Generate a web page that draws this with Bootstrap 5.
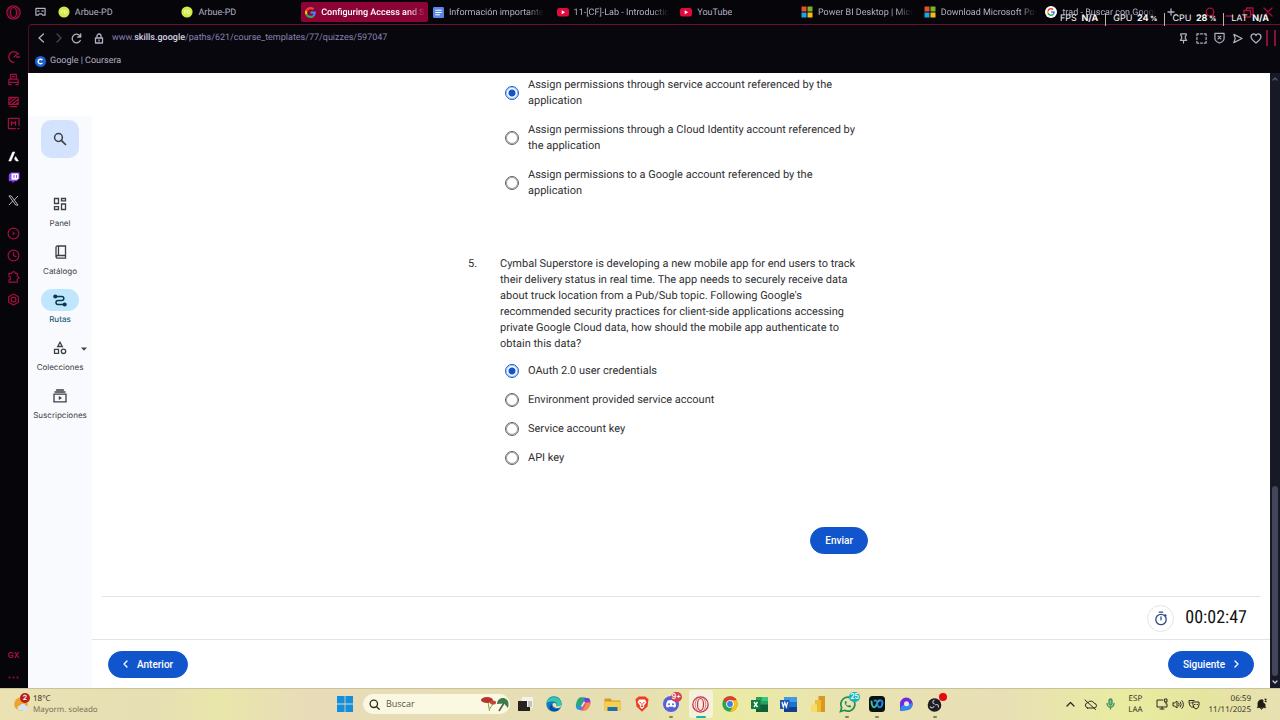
<!DOCTYPE html>
<html lang="es">
<head>
<meta charset="utf-8">
<meta name="viewport" content="width=device-width, initial-scale=1">
<title>Configuring Access and Security</title>
<link href="https://cdn.jsdelivr.net/npm/bootstrap@5.3.0/dist/css/bootstrap.min.css" rel="stylesheet">
<style>
:root{--gx:#a50f3c;--blue:#1155cc;--ui:Inter,"Liberation Sans",sans-serif;--seg:"Open Sans","Noto Sans",sans-serif;--rob:Roboto,"Liberation Sans",sans-serif}
body{font-family:var(--rob);font-size:11px;line-height:16px;color:#303134;background:#05050a;text-rendering:geometricPrecision}
svg{display:block;flex:none}
a{text-decoration:none;color:inherit}
button.bare{background:none;border:0;padding:0;color:inherit;display:grid;place-items:center}
.line-ic{fill:none;stroke:currentColor;stroke-width:1.3;stroke-linecap:round;stroke-linejoin:round}
.center-grid{display:grid;place-items:center}
.shrink-y{min-height:0}
.shrink-x{min-width:0}
/* browser chrome */
.gx-rail{width:28px;color:var(--gx);flex:none;padding-right:1px}
.gx-rail .slot{height:22px;width:27px}
.gx-rail .logo-slot{height:25px;margin-bottom:21px}
.gx-rail .gap-slot{margin-top:11px}
.gx-rail .gx-label{font:700 8px/22px var(--ui)}
.chrome{font-family:var(--rob);color:#b4b1c0;min-width:0}
.strip{height:24px;padding-right:7px}
.spaces{width:18px}
.tabs{display:grid;grid-template-columns:124fr 124fr 128fr 124fr 124fr 121fr 123fr 122fr 124fr;min-width:0}
.tab-item{height:20px;padding:0 3px 0 4px;gap:5px;font-size:9px;line-height:20px;min-width:0;overflow:hidden;white-space:nowrap;border-radius:2px;margin-right:1px}
.tab-item span{overflow:hidden;min-width:0;padding-top:1px}
.tab-item .fade-end{-webkit-mask-image:linear-gradient(90deg,#000 82%,transparent)}
.tab-item.active{background:#8c0436;color:#fff;font-weight:500}
.frame{border-top:1px solid #6b1030;border-left:1px solid #4c0c24;border-top-left-radius:4px;background:#07070d}
.addr{height:26px;padding:0 4px 0 8px}
.url{font-size:9px;line-height:16px;color:#8a84b0}
.url b{color:#d6d4e4;font-weight:500}
.marks{height:22px;padding-left:6px;font-size:9px;padding-bottom:2px}
.plus{width:12px;height:12px;background:#1b1a2b;border-radius:2px;margin-right:28px}
.gxbar{width:2px;height:16px;background:#8c0f39}
.wincon{color:var(--gx);gap:9px}
.perf{position:absolute;top:12px;right:11px;gap:7px;color:#f4f4f4;font:400 9px/14px var(--ui)}
.perf b{font-weight:700;margin-left:2px}
.perf small{font-size:7px}
.perf i{width:1px;height:13px;background:#b5b5b5}
/* page */
.site{background:#fff;min-height:0}
.side{width:64px;margin-top:43px;background:#f8fafd;padding-top:4px;flex:none;font:400 8px/12px var(--ui);color:#3c4043}
.side .find{width:38px;height:38px;border-radius:10px;background:#d3e3fd;margin-bottom:35px}
.side .entry{height:48px;width:64px;gap:2px;position:relative}
.pill{width:38px;height:22px;border-radius:11px}
.active .pill{background:#bfe6fd;color:#063b4a}
.side .active{color:#1c5a7c;font-weight:500}
.caret{position:absolute;right:5px;top:10px}
.quiz{width:400px;margin:0 auto;padding-top:4px}
.viewport{padding-right:26px;overflow:hidden}
.opts{gap:13px;padding-left:37px}
.opts label{gap:9px}
.opts .form-check-input{width:14px;height:14px;margin:0;float:none;flex:none;background:#fff;border:1px solid #5f6368;box-shadow:inset 0 0 0 1px #a3a5a8}
.opts .form-check-input:checked{border-color:#1a5bd0;box-shadow:inset 0 0 0 1px #a9c4ee;background:radial-gradient(circle,#1155cc 3px,#fff 4px)}
.opts .wraps{max-width:330px}
.q-row{margin-top:57px;margin-bottom:11px}
.q-num{width:32px;flex:none}
.q-text{max-width:356px}
.btn-g{--bs-btn-color:#fff;--bs-btn-bg:var(--blue);--bs-btn-border-color:var(--blue);--bs-btn-hover-bg:#0b4ab8;--bs-btn-hover-color:#fff;--bs-btn-padding-x:14px;--bs-btn-padding-y:5px;--bs-btn-border-radius:14px;font:500 10px/15px var(--rob);height:27px;gap:9px}
.send{margin-top:61px}
.rule{border-top:1px solid #e0e3e8;margin:0 10px}
.clockrow{height:42px;padding-right:23px;gap:11px}
.ring{width:27px;height:27px;border:1px solid #e1e4ea;border-radius:50%;color:#2f4b87}
.digits{font:400 18px/24px "Roboto Condensed","Liberation Sans Narrow",Roboto,sans-serif;color:#111}
.foot{border-top:1px solid #e0e3e8;height:49px;padding:0 16px}
.sbar{width:10px;background:#171a26;color:#c9cbd6;flex:none;padding:4px 0}
.thumb{width:6px;height:190px;background:#42465a;border-radius:3px}
/* taskbar */
.dock{height:32px;background:linear-gradient(90deg,#eae2b2 0,#e6dfb4 12%,#e9e6aa 17%,#e8dcb8 24%,#e6dfb2 50%,#ebeba4 57%,#e9e3b0 66%,#e8dfb6 78%,#e9eca0 88%,#e6e59f 94%,#e8e0b2);border-top:1px solid #c9c29c;padding-bottom:1px;font:400 8px/11px var(--seg);color:#2c2a20;display:grid;grid-template-columns:1fr 620px 1fr;align-items:center}
.weather{padding-left:13px;gap:4px}
.weather .sky{color:#706b50}
.launcher{padding-left:7px}
.start-btn{width:16px}
.seek{width:147px;height:20px;border-radius:10px;background:#fbf8e2;padding:0 2px 0 6px;gap:6px;margin-left:6px}
.seek input{width:88px;border:0;background:none;outline:0;padding:0;font:400 9px/16px var(--seg);color:#55534a}
.apps{display:grid;grid-template-columns:repeat(15,1fr);flex:1}
.app-ic{position:relative;height:28px;width:100%}
.app-ic.run::after{content:"";position:absolute;bottom:0;left:50%;margin-left:-2px;width:4px;height:2px;border-radius:1px;background:#85805f}
.app-ic.now{background:#f6f1da!important;border-radius:3px;width:24px;justify-self:center}
.app-ic.now::after{width:10px;margin-left:-5px;background:#17b3b0}
.bub{position:absolute;z-index:1;border-radius:6px;color:#fff;font:600 7px/10px var(--ui);text-align:center;min-width:10px;height:10px;padding:0 1px}
.bub-weather{left:20px;top:0;background:#b5201c}
.bub-chat{right:4px;top:2px;background:#d34155}
.bub-wa{right:2px;top:2px;background:#17b3bb}
.bub-rec{right:3px;top:3px;min-width:8px;height:8px;background:#e8090d}
.tray{padding-right:13px;gap:9px}
.tray .trio{gap:4px}
</style>
</head>
<body>
<svg width="0" height="0" class="position-absolute" aria-hidden="true"><defs>
<symbol id="pd" viewBox="0 0 12 12"><circle cx="6" cy="6" r="5.6" fill="#d3ea45"/><path d="M3.4 7.8V4.2h1a1 1 0 0 1 0 2.1h-1M6.6 4.2v3.6h.6a1.8 1.8 0 0 0 0-3.6z" fill="none" stroke="#f3f8b8" stroke-width=".9"/></symbol>
<symbol id="gg" viewBox="0 0 48 48"><path fill="#ea4335" d="M24 9.5c3.5 0 6.700 1.200 9.200 3.600l6.900-6.900C35.900 2.400 30.500 0 24 0 14.600 0 6.500 5.400 2.600 13.200l8 6.200C12.400 13.700 17.700 9.500 24 9.500z"/><path fill="#4285f4" d="M47 24.500c0-1.600-.2-3.100-.4-4.500H24v9h12.900c-.6 3-2.200 5.500-4.700 7.200l7.700 6C44.400 38 47 31.800 47 24.500z"/><path fill="#fbbc05" d="M10.500 28.600a14 14 0 0 1 0-9.200l-8-6.200a24 24 0 0 0 0 21.600z"/><path fill="#34a853" d="M24 48c6.500 0 11.900-2.100 15.900-5.800l-7.700-6c-2.200 1.500-4.900 2.300-8.200 2.300-6.300 0-11.600-4.200-13.500-9.900l-8 6.200C6.500 42.600 14.600 48 24 48z"/></symbol>
<symbol id="yt" viewBox="0 0 12 12"><rect y="2" width="12" height="8.500" rx="2.500" fill="#e00a3c"/><path d="M4.700 4.300v4l3.400-2z" fill="#fff"/></symbol>
<symbol id="ms" viewBox="0 0 12 12"><path fill="#e8502a" d="M.5.5h5v5h-5z"/><path fill="#7db32c" d="M6.500.5h5v5h-5z"/><path fill="#22a2e0" d="M.5 6.500h5v5h-5z"/><path fill="#f6bb1a" d="M6.500 6.500h5v5h-5z"/></symbol>
</defs></svg>

<div class="d-flex flex-column vh-100 position-relative">
<div class="d-flex flex-fill shrink-y">

  <nav class="gx-rail d-flex flex-column align-items-center" aria-label="Opera GX">
    <button class="bare logo-slot slot" aria-label="Opera"><svg width="15" height="15" viewBox="0 0 15 15" class="line-ic"><circle cx="7.500" cy="7.500" r="6.600"/><ellipse cx="7.500" cy="7.500" rx="3" ry="5.200"/><path d="M5 1.700c-3 3-3 8.600 0 11.600M10 1.700c3 3 3 8.600 0 11.600" stroke-width=".7"/></svg></button>
    <button class="bare slot" aria-label="GX Control"><svg width="14" height="14" viewBox="0 0 14 14" class="line-ic"><path d="M7 12.300A5.300 5.300 0 1 1 11.500 4.200M7 7l3-3M9.500 7h3"/></svg></button>
    <button class="bare slot" aria-label="Mods"><svg width="13" height="13" viewBox="0 0 14 14" class="line-ic"><path d="M4 6.500v-5h6v5M2 12V7.500q0-1 1-1h8q1 0 1 1V12M2 10h10M2 12.500h2.500M9.500 12.500H12M6 4h2"/></svg></button>
    <button class="bare slot" aria-label="GX Corner"><svg width="13" height="13" viewBox="0 0 14 14" class="line-ic"><path d="M2 2.500h10v7.500H2zM2 6l4-3.500M2 9.500l8-7M5.500 10 12 4.500M9.500 10 12 8M3.500 12.500h7"/></svg></button>
    <button class="bare slot" aria-label="Mensajes"><svg width="13" height="13" viewBox="0 0 14 14" class="line-ic"><path d="M13 9V1.500H1.500v11H9M13 12.500h-1.500"/><path d="M4.800 9V5L7 7.200 9.200 5v4"/></svg></button>
    <button class="bare slot gap-slot text-white" aria-label="Aria"><svg width="11" height="11" viewBox="0 0 12 12"><path d="M5 1h2.500L3.300 11H.8L5 1zM8.300 6 11.500 11H8.800L7 8.500z" fill="#fff" stroke="#fff" stroke-width=".5"/></svg></button>
    <button class="bare slot" aria-label="Twitch"><svg width="12" height="12" viewBox="0 0 12 12"><path d="M3 .5h8.500v6L8.700 9.200H6.500l-2 2v-2H.8V2.700z" fill="#8d45f5"/><path d="M3.500 1.500h7v4.700L9 7.700H3.500z" fill="#fff"/><path d="M6 3v2.800M8.500 3v2.800" stroke="#8d45f5"/></svg></button>
    <button class="bare slot" aria-label="X"><svg width="11" height="11" viewBox="0 0 12 12" fill="none" stroke="#c9c9c9"><path d="M1 1h2.500L11 11H8.500zM11 1 6.800 5.500M1 11l4.300-4.600"/></svg></button>
    <button class="bare slot gap-slot" aria-label="Reproductor"><svg width="13" height="13" viewBox="0 0 14 14" class="line-ic"><circle cx="7" cy="7" r="5.800"/><path d="M6.300 5.500v3L8.500 7z" fill="currentColor" stroke-width=".5"/></svg></button>
    <button class="bare slot" aria-label="Historial"><svg width="13" height="13" viewBox="0 0 14 14" class="line-ic"><circle cx="7" cy="7" r="5.800"/><path d="M7 3.800V7l2.500 1.200"/></svg></button>
    <button class="bare slot" aria-label="Extensiones"><svg width="13" height="13" viewBox="0 0 14 14" class="line-ic"><path d="M2 2.500h3.200a1.800 1.800 0 0 1 3.600 0H11v3l2 1.700-2 1.800v3H2.200V9.500a1.700 1.700 0 0 0 0-3.400z"/></svg></button>
    <button class="bare slot" aria-label="Ajustes"><svg width="13" height="13" viewBox="0 0 14 14" class="line-ic"><path d="M7 1l5.200 3v6L7 13l-5.200-3V4z"/><circle cx="7" cy="7" r="2.600"/></svg></button>
    <button class="bare slot gx-label mt-auto" aria-label="GX">GX</button>
    <button class="bare slot" aria-label="Más"><svg width="11" height="3" viewBox="0 0 11 3" fill="currentColor"><circle cx="1.500" cy="1.500" r="1"/><circle cx="5.500" cy="1.500" r="1"/><circle cx="9.500" cy="1.500" r="1"/></svg></button>
  </nav>

  <div class="d-flex flex-column flex-fill shrink-x">
    <header class="chrome">
      <div class="strip d-flex align-items-center">
        <button class="bare spaces ms-1" aria-label="Espacios"><svg width="11" height="10" viewBox="0 0 12 10" class="line-ic"><path d="M1 1h10v7.500H8.500L7.300 7H4.700L3.500 8.500H1z"/><path d="M3 4h1.500M7.500 4H9"/></svg></button>
        <div class="tabs flex-fill ms-1">
          <a href="#" class="tab-item d-flex align-items-center"><svg width="12" height="12"><use href="#pd"/></svg><span>Arbue-PD</span></a>
          <a href="#" class="tab-item d-flex align-items-center"><svg width="12" height="12"><use href="#pd"/></svg><span>Arbue-PD</span></a>
          <a href="#" class="tab-item active d-flex align-items-center"><svg width="11" height="11"><use href="#gg"/></svg><span class="fade-end">Configuring Access and S</span></a>
          <a href="#" class="tab-item d-flex align-items-center"><svg width="11" height="11" viewBox="0 0 12 12"><rect width="12" height="12" rx="1.500" fill="#5a86e8"/><path d="M2.500 3.500h7M2.500 6h7M2.500 8.500h5" stroke="#fff" stroke-width="1.200"/></svg><span class="fade-end">Información importante</span></a>
          <a href="#" class="tab-item d-flex align-items-center"><svg width="12" height="12"><use href="#yt"/></svg><span class="fade-end">11-[CF]-Lab - Introductic</span></a>
          <a href="#" class="tab-item d-flex align-items-center"><svg width="12" height="12"><use href="#yt"/></svg><span>YouTube</span></a>
          <a href="#" class="tab-item d-flex align-items-center"><svg width="12" height="12"><use href="#ms"/></svg><span class="fade-end">Power BI Desktop | Micr</span></a>
          <a href="#" class="tab-item d-flex align-items-center"><svg width="12" height="12"><use href="#ms"/></svg><span class="fade-end">Download Microsoft Pov</span></a>
          <a href="#" class="tab-item d-flex align-items-center"><svg width="12" height="12" viewBox="0 0 12 12"><circle cx="6" cy="6" r="6" fill="#fff"/><use href="#gg" x="2" y="2" width="8" height="8"/></svg><span class="fade-end">trad - Buscar con Googl</span></a>
        </div>
        <button class="bare plus" aria-label="Nueva pestaña"><svg width="8" height="8" viewBox="0 0 8 8" class="line-ic"><path d="M4 1v6M1 4h6"/></svg></button>
        <div class="wincon d-flex align-items-center">
          <button class="bare" aria-label="Buscar pestañas"><svg width="11" height="11" viewBox="0 0 11 11" class="line-ic"><circle cx="5" cy="5" r="3.800"/><path d="M8 8l2 2"/></svg></button>
          <button class="bare" aria-label="Minimizar"><svg width="9" height="9" viewBox="0 0 9 9" class="line-ic"><path d="M1 8h7"/></svg></button>
          <button class="bare" aria-label="Restaurar"><svg width="11" height="11" viewBox="0 0 11 11" class="line-ic"><path d="M1 3.500h6.500V10H1zM3.500 3.500V1H10v6.500H7.500"/></svg></button>
          <button class="bare" aria-label="Cerrar"><svg width="10" height="10" viewBox="0 0 10 10" class="line-ic"><path d="M1 1l8 8M9 1 1 9"/></svg></button>
        </div>
      </div>
      <div class="frame">
        <div class="addr d-flex align-items-center">
          <button class="bare me-2" aria-label="Atrás"><svg width="9" height="10" viewBox="0 0 9 10" class="line-ic"><path d="M6.500 1 2 5l4.500 4"/></svg></button>
          <button class="bare me-2" aria-label="Adelante" style="color:#4a4854"><svg width="9" height="10" viewBox="0 0 9 10" class="line-ic"><path d="M3 1l4 4-4 4"/></svg></button>
          <button class="bare me-2" aria-label="Recargar"><svg width="11" height="11" viewBox="0 0 11 11" class="line-ic"><path d="M9.300 7.500A4.300 4.300 0 1 1 9.500 4M9.700 1v3h-3"/></svg></button>
          <svg class="line-ic ms-1 me-1" width="10" height="11" viewBox="0 0 10 11"><path d="M1.500 5h7v5h-7zM3 5V3a2 2 0 0 1 4 0v2M5 7v1"/></svg>
          <a href="#" class="url ms-1">www.<b>skills.google</b>/paths/621/course_templates/77/quizzes/597047</a>
          <div class="d-flex align-items-center ms-auto gap-1">
            <div class="d-flex align-items-center" style="gap:7px">
            <button class="bare" aria-label="Fijar"><svg width="11" height="11" viewBox="0 0 12 12" class="line-ic"><path d="M3 1h6v1.500L8 3.500V6l1.500 2h-7L4 6V3.500L3 2.500zM6 8v3"/></svg></button>
            <button class="bare" aria-label="Captura"><svg width="11" height="11" viewBox="0 0 12 12" class="line-ic"><path d="M1 3V1h2M5 1h2M9 1h2v2M1 5v2M11 5v2M1 9v2h2M5 11h2M9 11h2M11 9v2"/></svg></button>
            <button class="bare" aria-label="Bloqueador"><svg width="11" height="12" viewBox="0 0 12 13" class="line-ic"><path d="M1 1.500h10V7q0 3-5 5-5-2-5-5zM4.500 4.500l3 3M7.500 4.500l-3 3"/></svg></button>
            <button class="bare" aria-label="Enviar a Flow"><svg width="11" height="11" viewBox="0 0 12 12" class="line-ic"><path d="M2 1.500 11 6l-9 4.500L3.500 6z"/></svg></button>
            <button class="bare" aria-label="Favorito"><svg width="12" height="11" viewBox="0 0 12 11" class="line-ic"><path d="M6 10C3 7.800 1 6 1 3.800A2.600 2.600 0 0 1 6 2.600a2.600 2.600 0 0 1 5 1.200C11 6 9 7.800 6 10z"/></svg></button>
            </div>
            <div class="d-flex" style="gap:6px"><span class="gxbar"></span><span class="gxbar"></span></div>
          </div>
        </div>
        <div class="marks d-flex align-items-center gap-1">
          <svg width="11" height="11" viewBox="0 0 12 12"><circle cx="6" cy="6" r="6" fill="#1a62d6"/><path d="M8 4.500a2.500 2.500 0 1 0 0 3" fill="none" stroke="#fff" stroke-width="1.600"/></svg>
          <a href="#">Google | Coursera</a>
        </div>
      </div>
    </header>

    <div class="d-flex flex-fill shrink-y">
      <div class="site d-flex flex-fill shrink-x">
        <nav class="side d-flex flex-column align-items-center" aria-label="Principal">
          <button class="bare find" aria-label="Buscar"><svg width="14" height="14" viewBox="0 0 14 14" class="line-ic"><circle cx="5.500" cy="5.500" r="3.900" stroke-width="1.500"/><path d="M8.300 8.300 12.500 12.500" stroke-width="1.700"/></svg></button>
          <a href="#" class="entry d-flex flex-column align-items-center"><span class="pill center-grid"><svg width="14" height="14" viewBox="0 0 14 14" class="line-ic" style="stroke-linejoin:miter"><path d="M1.500 1.500H5.500v5H1.500zM8.500 1.500h4v2.300h-4zM1.500 9.700H5.500V12.500H1.500zM8.500 7h4v5.500h-4z"/></svg></span><span>Panel</span></a>
          <a href="#" class="entry d-flex flex-column align-items-center"><span class="pill center-grid"><svg width="13" height="14" viewBox="0 0 13 14" class="line-ic" style="stroke-linejoin:miter"><path d="M3.500 1h8v9.500h-8M3.500 10.500a1.300 1.300 0 0 0 0 2.600h8v-2.600M2 12V2.500Q2 1 3.500 1M4.500 1v9.500"/></svg></span><span>Catálogo</span></a>
          <a href="#" class="entry active d-flex flex-column align-items-center"><span class="pill center-grid"><svg width="14" height="13" viewBox="0 0 14 13" class="line-ic"><circle cx="2.300" cy="2.500" r="1.400" fill="currentColor"/><circle cx="11.700" cy="10.500" r="1.400" fill="currentColor"/><path d="M3.500 2.500h5.300a2 2 0 0 1 0 4H5a2 2 0 0 0 0 4h6" stroke-width="1.500"/></svg></span><span>Rutas</span></a>
          <a href="#" class="entry d-flex flex-column align-items-center"><span class="pill center-grid"><svg width="14" height="14" viewBox="0 0 14 14" class="line-ic" style="stroke-linejoin:miter"><path d="M7 1.300 9.300 5.500H4.700zM1.500 8.300h4v4h-4z"/><circle cx="10.500" cy="10.300" r="2.200"/></svg></span><span>Colecciones</span><svg class="caret" width="6" height="4" viewBox="0 0 6 4"><path d="M0 .5h6L3 3.700z" fill="#444"/></svg></a>
          <a href="#" class="entry d-flex flex-column align-items-center"><span class="pill center-grid"><svg width="14" height="14" viewBox="0 0 14 14" class="line-ic" style="stroke-linejoin:miter"><path d="M1 5.200h12v7.600H1zM2 3h10M3.500 1h7"/><path d="M5.800 7v4l3.200-2z" fill="currentColor" stroke="none"/></svg></span><span>Suscripciones</span></a>
        </nav>

        <main class="d-flex flex-column flex-fill shrink-x">
          <div class="viewport flex-fill">
            <form class="quiz" onsubmit="return false">
              <div class="opts d-flex flex-column">
                <label class="d-flex align-items-center"><input class="form-check-input" type="radio" name="q4" checked><span class="wraps">Assign permissions through service account referenced by the application</span></label>
                <label class="d-flex align-items-center"><input class="form-check-input" type="radio" name="q4"><span class="wraps">Assign permissions through a Cloud Identity account referenced by the application</span></label>
                <label class="d-flex align-items-center"><input class="form-check-input" type="radio" name="q4"><span class="wraps">Assign permissions to a Google account referenced by the application</span></label>
              </div>
              <div class="q-row d-flex"><span class="q-num">5.</span><div class="q-text">Cymbal Superstore is developing a new mobile app for end users to track their delivery status in real time. The app needs to securely receive data about truck location from a Pub/Sub topic. Following Google's recommended security practices for client-side applications accessing private Google Cloud data, how should the mobile app authenticate to obtain this data?</div></div>
              <div class="opts d-flex flex-column">
                <label class="d-flex align-items-center"><input class="form-check-input" type="radio" name="q5" checked><span>OAuth 2.0 user credentials</span></label>
                <label class="d-flex align-items-center"><input class="form-check-input" type="radio" name="q5"><span>Environment provided service account</span></label>
                <label class="d-flex align-items-center"><input class="form-check-input" type="radio" name="q5"><span>Service account key</span></label>
                <label class="d-flex align-items-center"><input class="form-check-input" type="radio" name="q5"><span>API key</span></label>
              </div>
              <div class="send d-flex justify-content-end"><button class="btn btn-g" type="submit">Enviar</button></div>
            </form>
          </div>
          <div class="rule"></div>
          <div class="clockrow d-flex align-items-center justify-content-end">
            <span class="ring center-grid"><svg width="14" height="15" viewBox="0 0 14 15" class="line-ic"><circle cx="7" cy="8.500" r="5.200"/><path d="M5.300 1.200h3.400M7 5.800v3M11 3.800l1 1"/></svg></span>
            <span class="digits">00:02:47</span>
          </div>
          <div class="foot d-flex align-items-center justify-content-between">
            <button class="btn btn-g d-flex align-items-center"><svg width="5" height="8" viewBox="0 0 5 8" class="line-ic"><path d="M4 1 1 4l3 3"/></svg>Anterior</button>
            <button class="btn btn-g d-flex align-items-center">Siguiente<svg width="5" height="8" viewBox="0 0 5 8" class="line-ic"><path d="M1 1l3 3-3 3"/></svg></button>
          </div>
        </main>
      </div>
      <div class="sbar d-flex flex-column align-items-center" aria-hidden="true">
        <svg width="6" height="4" viewBox="0 0 6 4" class="line-ic" style="color:#555a6c"><path d="M1 3l2-2 2 2"/></svg>
        <div class="thumb mt-auto mb-1"></div>
        <svg width="6" height="4" viewBox="0 0 6 4" class="line-ic"><path d="M1 1l2 2 2-2"/></svg>
      </div>
    </div>
  </div>
</div>

<div class="perf d-flex align-items-center"><span>FPS <b>N/A</b></span><i></i><span>GPU <b>24<small> %</small></b></span><i></i><span>CPU <b>28<small> %</small></b></span><i></i><span>LAT <b>N/A</b></span></div>

<footer class="dock">
  <div class="weather d-flex align-items-center position-relative">
    <svg width="16" height="16" viewBox="0 0 16 16"><circle cx="8" cy="8" r="6.800" fill="#f0a32a"/><path d="M7 14.500a2.500 2.500 0 0 1 0-5 3.200 3.200 0 0 1 5.500-.3 2.700 2.700 0 0 1 0 5.300z" fill="#d5e4f5"/></svg>
    <span class="bub bub-weather">2</span>
    <div><div>18°C</div><div class="sky">Mayorm. soleado</div></div>
  </div>
  <div class="launcher d-flex align-items-center">
    <button class="bare start-btn me-1" aria-label="Inicio"><svg width="16" height="16" viewBox="0 0 16 16"><path fill="#138fdc" d="M0 0h7.600v7.600H0zM8.400 0H16v7.600H8.400zM0 8.400h7.600V16H0zM8.400 8.400H16V16H8.400z"/></svg></button>
    <div class="seek d-flex align-items-center">
      <svg width="11" height="11" viewBox="0 0 11 11" class="line-ic"><circle cx="4.800" cy="4.800" r="3.700"/><path d="M7.700 7.700l2.500 2.500"/></svg>
      <input type="text" value="Buscar" aria-label="Buscar">
      <svg width="30" height="16" viewBox="0 0 30 16"><path d="M8 6l1.500 9M15 5 9.500 13" stroke="#7fa04a" fill="none"/><ellipse cx="7" cy="4" rx="6" ry="3" fill="#b5342a"/><ellipse cx="13" cy="6.500" rx="3" ry="2" fill="#c2453a"/><path d="M17 8c0-4 4-7 8-5.500s4 6 3 9.500l-4-4.500z" fill="#3c7d4b"/><path d="M24 7l-5 8" stroke="#4d5c36" stroke-width="1.500"/></svg>
    </div>
    <div class="apps">
      <button class="bare app-ic" aria-label="Vista de tareas"><svg width="16" height="16" viewBox="0 0 16 16"><path fill="#f5f2ea" d="M5 1h11v11H5z"/><path fill="#c8c4ba" d="M11 5h4v6h-4z"/><path fill="#25221f" d="M1 5h9v9H1z" /><path fill="#25221f" d="M1 11h12v4H1z"/></svg></button>
      <button class="bare app-ic" aria-label="Edge"><svg width="16" height="16" viewBox="0 0 16 16"><circle cx="8" cy="8" r="7.700" fill="#1277c9"/><path d="M.5 7A7.700 7.700 0 0 1 15.700 8c0 3-2.500 3.700-5 3 1.400-3.500-1-5.600-3.700-5.600C4 5.300 1.500 6 .5 7z" fill="#39c8a4"/><path d="M6 8c-1 4 3 6 7.500 4.700-2 3-6 3-8.500 1.500S3.500 9 6 8z" fill="#0c4c93"/><path d="M7 7.500c1.500-1 3.500 0 3.500 1.500s-.5 2 5 .5c-1 2.500-4 3-6 2.300S5.700 9 7 7.500z" fill="#e9e4b5"/></svg></button>
      <button class="bare app-ic" aria-label="Copilot"><svg width="16" height="16" viewBox="0 0 16 16"><path d="M5 1.500h6L8.500 9 7 14H4.500C2 14 0 11 1.200 8z" fill="#2b93dc"/><path d="M5 1.500h4L6 10H2C0 8 2.500 2 5 1.500z" fill="#27a974"/><path d="M9 2h3c3 0 4.500 4 3 7s-3 5.500-6 5.500H5.500L8 8z" fill="#d653a2"/><path d="M11 7h4.500c-.5 4-3 7.500-6.500 7.500H5.500c3 0 4-3 5.500-7.500z" fill="#f38a45"/><path d="M9 2h3c2 0 3 1 3.200 3.500L10 6z" fill="#6248ce"/><path d="M9.500 6 6.500 10.500" stroke="#f2ead0" stroke-width="1.500"/></svg></button>
      <button class="bare app-ic" aria-label="Explorador"><svg width="17" height="15" viewBox="0 0 17 15"><path d="M.5 1.500h6l1.500 2h8.500v10H.5z" fill="#d59a1c"/><path d="M.5 4.500h16v9.500H.5z" fill="#f5cf52"/><path d="M3.500 10h10v4h-10z" fill="#1f6fb5"/></svg></button>
      <button class="bare app-ic" aria-label="Brave"><svg width="14" height="16" viewBox="0 0 14 16"><path d="M3.500.5h7l1.300 1.500 1.700 1-1 7.500L7 15.700 1.500 10.500.5 3l1.700-1z" fill="#ef3b1e"/><path d="M4 3.500h6l1.500 2.700L9 9.500l.3 1.500L7 13l-2.300-2L5 9.500 2.500 6.200z" fill="#fff"/><path d="M4.500 6.300l1.500.7M9.500 6.300L8 7M7 7v3M5.800 10.500h2.400" stroke="#ef3b1e"/></svg></button>
      <button class="bare app-ic run" aria-label="Discord"><svg width="16" height="16" viewBox="0 0 16 16"><circle cx="8" cy="8" r="8" fill="#5461db"/><path d="M4.500 4.500q3.500-1.200 7 0Q13.200 7 13 10.500q-1 .9-2.500 1l-.6-1q-1.900.5-3.800 0l-.6 1q-1.500-.1-2.500-1Q2.800 7 4.500 4.500z" fill="#fff"/><circle cx="6" cy="8.200" r="1" fill="#5461db"/><circle cx="10" cy="8.200" r="1" fill="#5461db"/></svg><span class="bub bub-chat">9+</span></button>
      <button class="bare app-ic run now" aria-label="Opera GX"><svg width="17" height="17" viewBox="0 0 17 17" fill="none" stroke="#c62a4d"><circle cx="8.500" cy="8.500" r="7.700" stroke-width="1.200"/><ellipse cx="8.500" cy="8.500" rx="3" ry="6" stroke-width="1.200"/><path d="M5.500 2.500c-3 3-3 9 0 12M11.500 2.500c3 3 3 9 0 12" stroke-width=".6"/></svg></button>
      <button class="bare app-ic" aria-label="Chrome"><svg width="16" height="16" viewBox="0 0 16 16"><circle cx="8" cy="8" r="7.700" fill="#2da44e"/><path d="M8 8 1.300 4.200A7.700 7.700 0 0 1 14.700 4.200z" fill="#e33b2e"/><path d="M8 8V4.200h6.700A7.700 7.700 0 0 1 8 15.700l3.300-6z" fill="#fbc116"/><circle cx="8" cy="8" r="3.800" fill="#fff"/><circle cx="8" cy="8" r="2.900" fill="#3b7ded"/></svg></button>
      <button class="bare app-ic" aria-label="Excel"><svg width="17" height="15" viewBox="0 0 17 15"><path fill="#25a35a" d="M5 0h12v15H5z"/><path fill="#125f37" d="M5 7.500h12V15H5z"/><path fill="#3cc47c" d="M11 0h6v4h-6z"/><path fill="#107c41" d="M0 3h9.500v9H0z"/><path d="M3 5l3.500 5M6.500 5 3 10" stroke="#fff" stroke-width="1.400"/></svg></button>
      <button class="bare app-ic" aria-label="Word"><svg width="17" height="15" viewBox="0 0 17 15"><path fill="#3f9be8" d="M4 0h13v5H4z"/><path fill="#2170cd" d="M4 5h13v5H4z"/><path fill="#123f8c" d="M4 10h13v5H4z"/><path fill="#1a57b5" d="M0 3h9.500v9H0z"/><path d="M2 5l1.300 5 1.500-4.500L6.300 10l1.300-5" stroke="#fff" stroke-width="1.200" fill="none"/></svg></button>
      <button class="bare app-ic" aria-label="Power BI"><svg width="14" height="16" viewBox="0 0 14 16"><path fill="#d9981e" d="M7.500 0H14v16H7.500z"/><path fill="#edbb35" d="M4 4h6v12H4z"/><path fill="#f7dc6c" d="M0 8.500h6V16H0z"/></svg></button>
      <button class="bare app-ic run" aria-label="WhatsApp"><svg width="17" height="17" viewBox="0 0 17 17" fill="none" stroke="#238b55" stroke-width="1.700"><path d="M1.500 15.500l1.200-4A7 7 0 1 1 5.500 14.300z"/><path d="M5.800 5.500c-.5 3 2.500 6 5.700 6l.7-1.500-2-1-1 .8C8 9.500 7.200 8.500 7 7.700l.9-.9-.8-1.800z" fill="#238b55" stroke="none"/></svg><span class="bub bub-wa">25</span></button>
      <button class="bare app-ic run" aria-label="Webex"><svg width="16" height="16" viewBox="0 0 16 16"><rect width="16" height="16" rx="3.500" fill="#0b0f12"/><path d="M2.500 5.500c.3 4 1.200 5.700 2.600 5.700S7.500 9 8 7.500s1-3 2.700-3" stroke="#38c2a0" stroke-width="2" fill="none" stroke-linecap="round"/><path d="M8 5.500c.2 3.700 1 5.700 2.500 5.700s2.800-1.700 2.900-4.200-1-2.700-2.400-2.500M5.500 4.700c1.300-.4 2.300 0 2.500.8" stroke="#1b8be6" stroke-width="2" fill="none" stroke-linecap="round"/></svg></button>
      <button class="bare app-ic" aria-label="Pulse"><svg width="16" height="16" viewBox="0 0 16 16"><path d="M2 15V8a6.300 6.300 0 1 1 6.500 6.200C5 14.200 5 15 2 15z" fill="#6d2be0"/><path d="M2 15c0-5 3-7 7-7s5-1 5.600-2c1 5-2.600 8.200-6.100 8.200C5 14.200 5 15 2 15z" fill="#3188f0"/><circle cx="8.500" cy="7.800" r="2.500" fill="#efe6da"/></svg></button>
      <button class="bare app-ic run" aria-label="OBS"><svg width="16" height="16" viewBox="0 0 16 16"><circle cx="7.500" cy="9" r="6.800" fill="#1e1c22"/><path d="M7.500 8c-2-.5-2.500-3 0-4M8 9c1.500-1.200 4 0 3.500 2.500M7 10c-.2 2-3 2.500-4 .5" stroke="#b8b8b8" stroke-width="1.200" fill="none"/></svg><span class="bub bub-rec"></span></button>
    </div>
  </div>
  <div class="tray d-flex align-items-center justify-content-end">
    <svg width="9" height="6" viewBox="0 0 9 6" class="line-ic"><path d="M1 5l3.500-3.500L8 5"/></svg>
    <svg class="line-ic" width="13" height="11" viewBox="0 0 13 11"><path d="M3.500 9h6.500a2.300 2.300 0 0 0 .3-4.600A3.700 3.700 0 0 0 4 3.500 2.800 2.800 0 0 0 3.500 9zM1 1l10.500 9.500" stroke-width="1"/></svg>
    <svg class="line-ic" width="9" height="12" viewBox="0 0 9 12" style="color:#3d8c5c"><rect x="3" y="1" width="3" height="6" rx="1.500" fill="#7ec29a"/><path d="M1 5.500a3.500 3.500 0 0 0 7 0M4.500 9v2"/></svg>
    <div class="text-center mx-1">ESP<br>LAA</div>
    <div class="trio d-flex align-items-center">
    <svg class="line-ic" width="12" height="12" viewBox="0 0 12 12"><path d="M7 2H1v7h10V6M4 11h4M6 9v2M9 1h2v3H9zM10 4v2" stroke-width="1"/></svg>
    <svg class="line-ic" width="12" height="11" viewBox="0 0 12 11"><path d="M1 4v3h1.500L5 9V2L2.500 4zM6.700 4q1 1.500 0 3M8.300 3q2 2.500 0 5M10 1.700q3 3.800 0 7.600" stroke-width="1"/></svg>
    <svg class="line-ic" width="12" height="11" viewBox="0 0 12 11"><path d="M6 8H3.500Q1 7 1 1.500h5M5 3h6v3q0 3-3 4-3-1-3-4zM6.500 5.500h.5M9 5.500h.5M2.800 3.800h.5" stroke-width="1"/></svg>
    </div>
    <div class="text-end">06:59<br>11/11/2025</div>
    <svg width="11" height="12" viewBox="0 0 12 12" style="margin-left:-4px"><path d="M2 9V5a4 4 0 0 1 6-3.200A3 3 0 0 0 10 6v3l1 1H1zM4.500 10.500h3L6 12zM9 .5h2.500L9.500 3.500H12" fill="#1d1c16" stroke="#1d1c16" stroke-width=".5"/></svg>
  </div>
</footer>
</div>
<script src="https://cdn.jsdelivr.net/npm/bootstrap@5.3.0/dist/js/bootstrap.bundle.min.js"></script>
</body>
</html>
